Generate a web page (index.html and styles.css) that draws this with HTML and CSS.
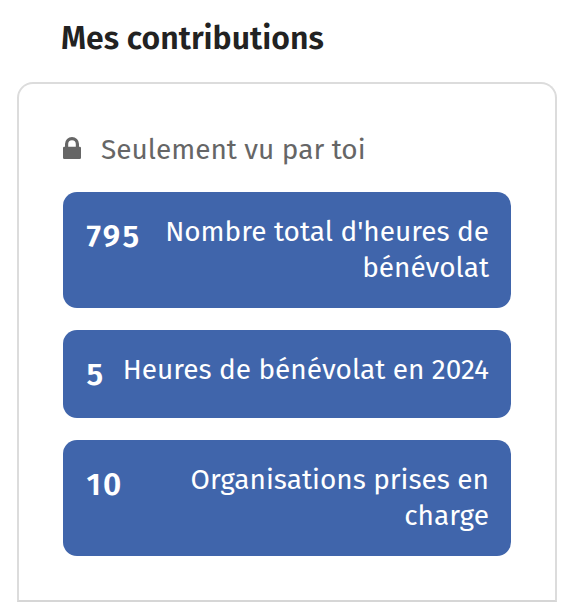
FILE: index.html
```html
<!DOCTYPE html>
<html lang="fr">
<head>
<meta charset="utf-8">
<title>Mes contributions</title>
<link rel="stylesheet" href="styles.css">
</head>
<body>
<h1 class="title">Mes contributions</h1>
<section class="panel">
  <p class="privacy">
    <svg class="lock" viewBox="0 0 18 22" aria-hidden="true"><path fill-rule="evenodd" d="M2 9.7V7a7 7 0 0 1 14 0v2.7h.7a1.3 1.3 0 0 1 1.3 1.3v9.7a1.3 1.3 0 0 1-1.3 1.3H1.3A1.3 1.3 0 0 1 0 20.700V11a1.300 1.300 0 0 1 1.300-1.300zM5.200 9.700h7.600V7a3.800 3.800 0 0 0-7.600 0z"/></svg>
    <span class="note">Seulement vu par toi</span>
  </p>
  <div class="stats">
    <div class="stat"><strong class="value">795</strong><span class="label">Nombre total d'heures de<br>bénévolat</span></div>
    <div class="stat"><strong class="value">5</strong><span class="label">Heures de bénévolat en 2024</span></div>
    <div class="stat"><strong class="value">10</strong><span class="label">Organisations prises en<br>charge</span></div>
  </div>
</section>
</body>
</html>
```
FILE: styles.css
```css
* { box-sizing: border-box; }
body {
  margin: 0;
  height: 602px;
  overflow: hidden;
  background: #fff;
  font-family: "Fira Sans", "Noto Sans", sans-serif;
}
.title {
  margin: 0;
  padding: 16px 0 0 61px;
  height: 82px;
  font-size: 32px;
  line-height: 44px;
  font-weight: 600;
  color: #222;
  white-space: nowrap;
}
.panel {
  margin: 0 19px 0 17px;
  height: 520px;
  padding: 48px 44px 0;
  border: 2px solid #dcdcdc;
  border-bottom-color: #d6d6d6;
  border-radius: 16px 16px 0 0;
}
.privacy {
  display: flex;
  gap: 20px;
  margin: 0;
  height: 36px;
  color: #666;
  font-size: 28px;
  line-height: 36px;
}
.lock { width: 18px; height: 22px; margin-top: 5px; fill: #666; }
.note { white-space: nowrap; }
.stats { display: grid; gap: 22px; margin-top: 24px; }
.stat {
  display: flex;
  justify-content: space-between;
  padding: 22px 22px 22px 23.5px;
  border-radius: 14px;
  background: #4065ab;
  color: #fff;
}
.value {
  height: 44px;
  font-size: 31.5px;
  font-weight: 600;
  line-height: 45px;
  letter-spacing: 2.2px;
}
.label { font-size: 28px; line-height: 36px; text-align: right; white-space: nowrap; }
```
